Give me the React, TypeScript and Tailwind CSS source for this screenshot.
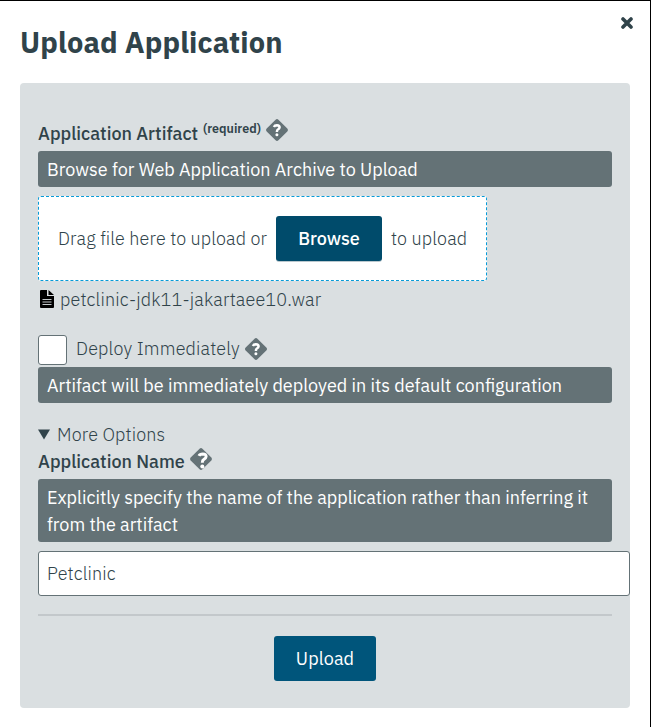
import type { ReactNode } from 'react';

function HelpIcon({ large = false }: { large?: boolean }) {
  return (
    <svg className="block h-6 w-6 shrink-0" viewBox="0 0 24 24" aria-label="Help">
      <rect x="3.7" y="3.7" width="16.6" height="16.6" rx="2" transform="rotate(45 12 12)" fill="#647276" />
      {large ? (
        <g>
          <path d="M10 8.8Q10.8 6.9 13.8 6.9Q17.3 7 17.1 9.6Q16.9 11.3 14.9 12.3Q13.3 13.1 13.3 15.8" fill="none" stroke="#fff" strokeWidth="3" />
          <circle cx="13.3" cy="19.6" r="2" fill="#fff" />
        </g>
      ) : (
        <g>
          <path d="M8.9 9Q9.6 7.3 11.9 7.3Q14.6 7.4 14.6 9.4Q14.5 10.7 12.9 11.5Q11.9 12 11.9 13.9" fill="none" stroke="#fff" strokeWidth="2.5" />
          <circle cx="11.9" cy="16.8" r="1.5" fill="#fff" />
        </g>
      )}
    </svg>
  );
}

function Hint({ children }: { children: ReactNode }) {
  return (
    <div className="rounded-[3px] bg-[#647276] px-[9px] py-[4.5px] text-[18px] leading-[27px] font-normal text-white">
      {children}
    </div>
  );
}

export default function App() {
  return (
    <div className="h-[727px] w-[651px] overflow-hidden border-t border-r border-black bg-white pl-5 pr-5 font-['IBM_Plex_Sans',Roboto,sans-serif] text-[18px] leading-[27px] font-light tracking-[0.12px] text-[#30434a]">
      <header className="flex h-[82px] items-start justify-between">
        <h1 className="pt-[21px] text-[29px] leading-10 font-bold tracking-[0.12px] whitespace-nowrap">Upload Application</h1>
        <button aria-label="Close" className="-mr-[3px] mt-[16px]">
          <svg className="block h-3 w-3" viewBox="0 0 12 12">
            <path d="M2 2L10 10M10 2L2 10" stroke="#30434a" strokeWidth="3.6" strokeLinecap="round" />
          </svg>
        </button>
      </header>

      <main className="h-[625px] w-[610px] rounded-[4px] bg-[#dadfe1] px-[18px]">
        <div className="flex h-[68px] items-start pt-[35px] tracking-normal whitespace-nowrap">
          <span className="mt-[2px] w-[165px] font-medium">Application Artifact</span>
          <span className="-mt-[3px] w-[62px] text-[12.5px] font-semibold">(required)</span>
          <HelpIcon />
        </div>
        <Hint><span className="tracking-normal">Browse for Web Application Archive to Upload</span></Hint>

        <div className="mt-[9px] flex h-[85px] w-[449px] items-center rounded-[3px] border border-dashed border-[#079bd8] bg-white pl-[19px] whitespace-nowrap">
          <span className="w-[218px] tracking-[0.1px]">Drag file here to upload or</span>
          <button className="h-[45px] w-[106px] rounded-[3px] bg-[#004b6b] font-medium tracking-[-0.1px] text-white shadow-[0_1px_0_#bac8ce]">Browse</button>
          <span className="ml-[9px]">to upload</span>
        </div>
        <div className="flex h-[36px] items-center whitespace-nowrap">
          <svg className="mr-[6px] ml-[2px] block h-[18px] w-[14px]" viewBox="0 0 14 18">
            <path d="M1 0H7V6H14V17Q14 18 13 18H1Q0 18 0 17V1Q0 0 1 0ZM8.5 0L14 5H8.5Z" fill="#000" />
            <path d="M2.5 9.5H11.5M2.5 12H11.5M2.5 14.5H11.5" stroke="#c3c8ca" />
          </svg>
          <span className="tracking-[0.15px]">petclinic-jdk11-jakartaee10.war</span>
        </div>

        <div className="mt-[18px] flex h-[30px] items-start whitespace-nowrap">
          <span role="checkbox" aria-checked="false" className="h-[30px] w-[29px] rounded-[3px] border border-[#647276] bg-white" />
          <span className="ml-[9px] w-[168px] tracking-[0.15px]">Deploy Immediately</span>
          <span className="mt-[2px]"><HelpIcon /></span>
        </div>
        <div className="mt-[2px]">
          <Hint><span className="tracking-normal">Artifact will be immediately deployed in its default configuration</span></Hint>
        </div>

        <div className="mt-[18px] flex h-[27px] items-center">
          <svg className="mr-[7px] block h-[11px] w-3" viewBox="0 0 12 11">
            <path d="M0 .5H12L6 10.5Z" fill="#30434a" />
          </svg>
          <span>More Options</span>
        </div>
        <div className="flex h-[31px] items-start">
          <span className="w-[151px] font-medium tracking-normal">Application Name</span>
          <span className="-mt-px"><HelpIcon large /></span>
        </div>
        <Hint>
          <span className="block tracking-normal whitespace-nowrap">Explicitly specify the name of the application rather than inferring it</span>
          <span className="block tracking-normal">from the artifact</span>
        </Hint>
        <div className="mt-[9px] flex h-[45px] w-[592px] items-center rounded-[3px] border border-[#647276] bg-white px-2">
          <span>Petclinic</span>
        </div>
        <hr className="mt-[18px] border-t-2 border-[#c3c8cb]" />
        <button className="mx-auto mt-5 block h-[45px] w-[102px] rounded-[3px] bg-[#00557b] font-normal tracking-[0.1px] text-white">Upload</button>
      </main>
    </div>
  );
}
